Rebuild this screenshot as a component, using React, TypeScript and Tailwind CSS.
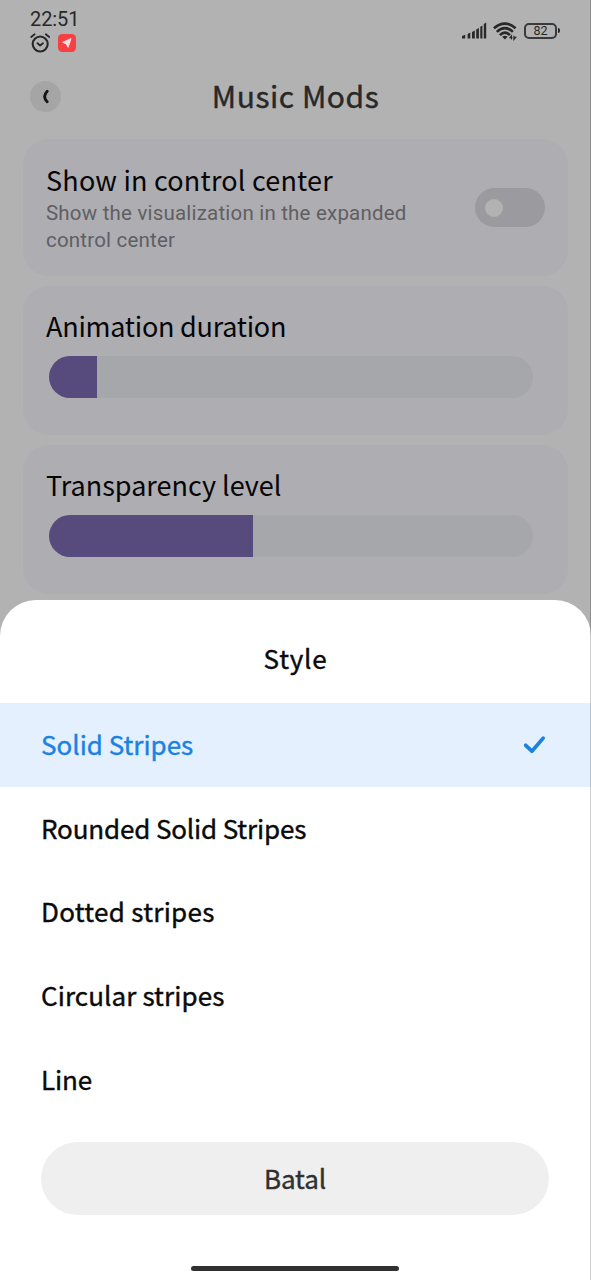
import React from "react";

const options = [
  { label: "Solid Stripes", spacing: "tracking-[0px]", selected: true },
  { label: "Rounded Solid Stripes", spacing: "tracking-[-0.15px]" },
  { label: "Dotted stripes", spacing: "tracking-[0.3px]" },
  { label: "Circular stripes", spacing: "tracking-[0.1px]" },
  { label: "Line", spacing: "tracking-[-0.1px]" },
];

function AlarmIcon() {
  return (
    <svg width="20" height="20" viewBox="0 0 20 20" fill="none" stroke="#282828" strokeLinecap="round">
      <circle cx="10.2" cy="11" r="7.5" strokeWidth="2.1" />
      <path d="M7.5 10.2 10.1 12.4l2.9-2.2" strokeWidth="1.9" strokeLinejoin="round" />
      <path d="M1.2 4 4.6 1.3M19.2 4 15.8 1.3" strokeWidth="1.8" />
    </svg>
  );
}

function PlaneIcon() {
  return (
    <svg width="18" height="18" viewBox="0 0 18 18">
      <rect width="18" height="18" rx="4.2" fill="#f64044" />
      <path d="M13 4.6 10.1 13.3 8.3 9.9 4.7 8.3Z" fill="#f2dede" stroke="#f2dede" strokeWidth="1" strokeLinejoin="round" />
    </svg>
  );
}

function SignalIcon() {
  return (
    <svg width="26" height="18" viewBox="0 0 26 18" fill="#282828">
      <path d="M0 14 3.2 12.7V16.4H0ZM5.6 12 8.3 10.6v5.8H5.6ZM10 10 12.8 8.4v8H10ZM14.2 7.6 16.9 6.1v10.3h-2.7ZM18.3 4.8 20.4 3.6v12.8h-2.1ZM21.8 2 24.2.6v15.8h-2.4Z" />
    </svg>
  );
}

function WifiIcon() {
  return (
    <svg width="24" height="19" viewBox="0 0 24 19" fill="none" stroke="#282828">
      <path d="M.9 6.2Q12-3 22.6 6.2" strokeWidth="2.6" />
      <path d="M3.8 9.9Q12 2.5 19.9 9.9" strokeWidth="2.6" />
      <path d="M6.9 13.2Q12 8 16.9 13.2" strokeWidth="2.6" />
      <path d="M9.2 14.8Q12 12.7 14.6 14.8L12 17.6Z" fill="#282828" stroke="none" />
      <path d="M18.5 17.6v-3.8l-1.6 2h2.6M20.9 13.8v3.8l1.9-2.2h-2.4" strokeWidth="1.1" />
    </svg>
  );
}

function Slider({ title, value, spacing }: { title: string; value: number; spacing: string }) {
  return (
    <section className="flex h-[149px] flex-col rounded-[26px] bg-[#aeadb2] pt-[22px] pr-[35px] pl-[23px]">
      <h2 className={`h-9 text-[27px] leading-9 whitespace-nowrap text-[#050507] ${spacing}`}>{title}</h2>
      <div className="mt-[12px] ml-[3px] h-[42px] overflow-hidden rounded-full bg-[#a6a7ab]">
        <div className="h-full bg-[#564b7c]" style={{ width: value }} />
      </div>
    </section>
  );
}

export default function App() {
  return (
    <div className="relative h-[1280px] w-[591px] overflow-hidden bg-[#b2b2b2] font-['Noto_Sans_CJK_SC',sans-serif]">
      <div className="flex h-[70px] justify-between pr-[31px] pl-[30px] font-['Roboto',sans-serif]">
        <div className="flex flex-col pt-[7px]">
          <span className="h-[24px] text-[20px] leading-[24px] tracking-[-0.1px] text-[#282828]">22:51</span>
          <div className="mt-[2px] flex items-center gap-[8px]">
            <AlarmIcon />
            <PlaneIcon />
          </div>
        </div>
        <div className="mt-[22px] flex h-[19px]">
          <SignalIcon />
          <div className="ml-[5px]"><WifiIcon /></div>
          <div className="ml-[7px] flex h-[17px] items-center">
            <div className="flex h-[16px] w-[33px] items-center justify-center rounded-[5px] border-2 border-[#3a3a3a] text-[12.5px] leading-[13px] text-[#282828]">
              82
            </div>
            <div className="ml-px h-[5px] w-[2px] rounded-r-sm bg-[#282828]" />
          </div>
        </div>
      </div>

      <header className="flex h-[53px] items-center px-[30px]">
        <button className="flex size-[31px] items-center justify-center rounded-full bg-[#a5a5a5]">
          <svg width="10" height="15" viewBox="0 0 10 15" fill="none" stroke="#141414" strokeWidth="2.8" strokeLinecap="round">
            <path d="M6.2 2.2Q1 7.5 6.2 12.8" />
          </svg>
        </button>
        <h1 className="h-[48px] flex-1 pr-[31px] text-center text-[30px] leading-[44px] tracking-[0.55px] text-[#282828] [-webkit-text-stroke:0.4px_#282828]">Music Mods</h1>
      </header>

      <main className="mt-[16px] flex flex-col gap-[10px] px-[23px]">
        <section className="flex h-[137px] items-center justify-between rounded-[26px] bg-[#aeadb2] px-[23px]">
          <div className="h-[137px] pt-[23px]">
            <h2 className="h-9 text-[27px] leading-9 tracking-[0.2px] whitespace-nowrap text-[#050507]">Show in control center</h2>
            <p className="pt-[2px] font-['Roboto',sans-serif] text-[20.5px] leading-[27px] tracking-[0.2px] whitespace-nowrap text-[#5f5f63]">
              Show the visualization in the expanded
              <br />
              control center
            </p>
          </div>
          <div className="flex h-[39px] w-[70px] items-center rounded-full bg-[#9b9b9f] pl-[10px]">
            <div className="size-[18px] rounded-full bg-[#b2b2b2]" />
          </div>
        </section>
        <Slider title="Animation duration" value={48} spacing="tracking-[-0.25px]" />
        <Slider title="Transparency level" value={204} spacing="tracking-[0px]" />
      </main>

      <div className="absolute inset-x-0 bottom-0 flex h-[680.5px] flex-col rounded-t-[36px] bg-white text-[26px] text-[#0a0a0a] [-webkit-text-stroke:0.4px_currentColor]">
        <h2 className="flex h-[103.5px] items-center justify-center pt-[12px] tracking-[0.8px]">Style</h2>
        <ul>
          {options.map((o) => (
            <li
              key={o.label}
              className={`flex h-[83.6px] items-center justify-between pr-[45px] pl-[41px] ${o.selected ? "bg-[#e4f0fe] text-[#1a82e2]" : ""}`}
            >
              <span className={`-mt-[2px] ${o.spacing}`}>{o.label}</span>
              {o.selected && (
                <svg width="23" height="19" viewBox="0 0 23 19" fill="none" stroke="#1a82e2" strokeWidth="3.7" strokeLinecap="round" strokeLinejoin="round">
                  <path d="m2.7 10.3 6.2 5.9L20.2 3.1" />
                </svg>
              )}
            </li>
          ))}
        </ul>
        <button className="mt-[21px] mr-[42px] ml-[41px] h-[73px] rounded-full bg-[#efefef] pb-[2px] tracking-[-0.1px] text-[#303030]">Batal</button>
        <div className="mt-[51px] mr-px h-[5px] w-[208px] self-center rounded-full bg-[#303030]" />
      </div>
      <div className="absolute inset-y-0 right-0 w-px bg-black/20" />
    </div>
  );
}
